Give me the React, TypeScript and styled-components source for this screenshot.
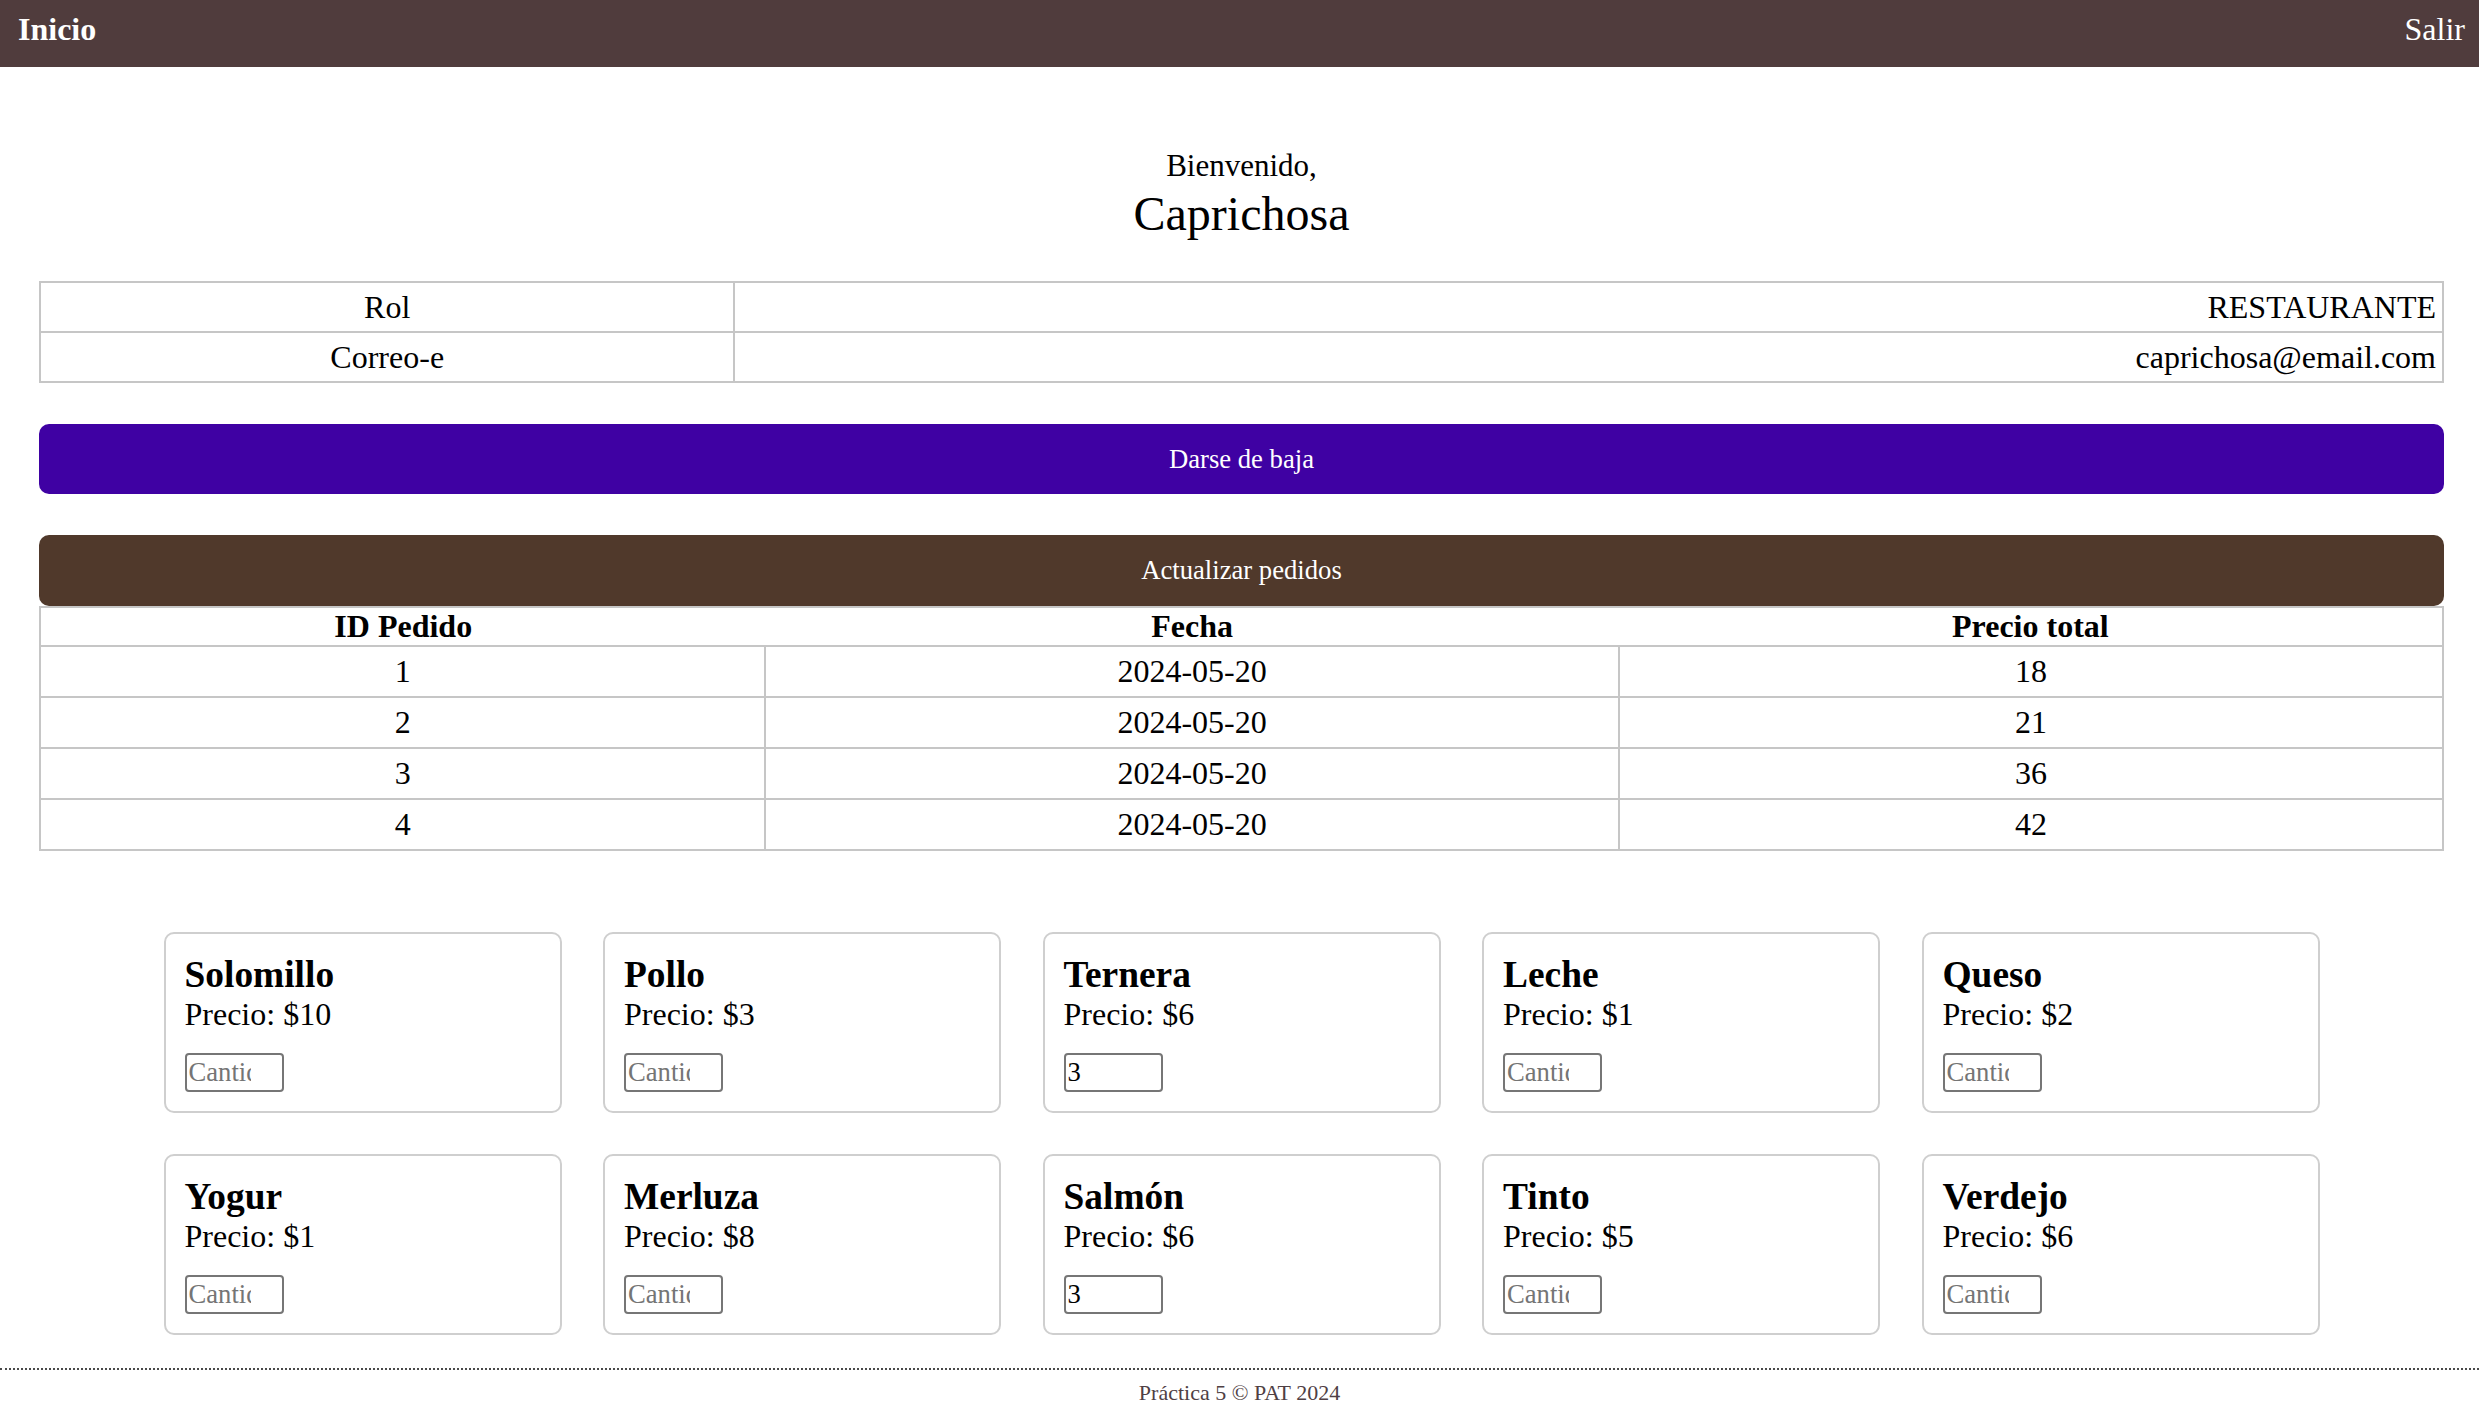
import React from "react";
import styled, { createGlobalStyle } from "styled-components";

const GlobalStyle = createGlobalStyle`
  html, body {
    margin: 0;
    padding: 0;
    background: #ffffff;
  }
  body {
    font-family: "Liberation Serif", "Times New Roman", serif;
    color: #000;
  }
  * { box-sizing: border-box; }
`;

const NavBar = styled.header`
  height: 67px;
  background: #503c3d;
  display: flex;
  justify-content: space-between;
  align-items: flex-start;
  padding: 11px 14px 0 18px;
`;

const NavLink = styled.a<{ $bold?: boolean }>`
  color: #ffffff;
  font-size: 32px;
  line-height: 37px;
  font-weight: ${(p) => (p.$bold ? 700 : 400)};
  text-decoration: none;
  cursor: pointer;
`;

const Main = styled.main`
  padding: 0 35px 0 39px;
`;

const Welcome = styled.section`
  margin-top: 81px;
  text-align: center;
`;

const Greeting = styled.p`
  margin: 0;
  font-size: 31px;
  line-height: 36px;
`;

const UserName = styled.h2`
  margin: 2px 0 0;
  font-size: 48px;
  line-height: 55px;
  font-weight: 400;
`;

const InfoTable = styled.table`
  width: 100%;
  margin-top: 40px;
  border-collapse: collapse;
  table-layout: fixed;
  font-size: 32px;
  line-height: 37px;
`;

const InfoCell = styled.td<{ $align: "center" | "right" }>`
  border: 2px solid #c6c6c6;
  padding: 6px 6px 5px;
  text-align: ${(p) => p.$align};
`;

const ActionButton = styled.button<{ $bg: string; $height: number }>`
  display: block;
  width: 100%;
  margin-top: 41px;
  height: ${(p) => p.$height}px;
  border: none;
  border-radius: 10px;
  background: ${(p) => p.$bg};
  color: #ffffff;
  font-family: "Liberation Serif", "Times New Roman", serif;
  font-size: 26.67px;
  cursor: pointer;
`;

const OrdersTable = styled.table`
  width: 100%;
  border-collapse: collapse;
  table-layout: fixed;
  border: 2px solid #c6c6c6;
  font-size: 32px;
  line-height: 37px;
`;

const HeadCell = styled.th`
  padding: 0;
  font-weight: 700;
  text-align: center;
  border-bottom: 2px solid #c6c6c6;
`;

const BodyCell = styled.td`
  padding: 6px 6px;
  text-align: center;
  border: 2px solid #c6c6c6;
`;

const ProductGrid = styled.section`
  margin-top: 81px;
  display: flex;
  flex-wrap: wrap;
  justify-content: center;
  gap: 41px 41.5px;
`;

const ProductCard = styled.article`
  width: 398px;
  border: 2px solid #cfcfcf;
  border-radius: 10px;
  padding: 19px;
`;

const ProductName = styled.h3`
  margin: 0;
  font-size: 37.4px;
  line-height: 43px;
  font-weight: 700;
`;

const ProductPrice = styled.p`
  margin: 0;
  font-size: 32px;
  line-height: 37px;
`;

const QtyInput = styled.input`
  display: block;
  margin-top: 20px;
  width: 99px;
  height: 39px;
  padding: 0 31px 0 2px;
  border: 2px solid #767676;
  border-radius: 4px;
  font-family: "Liberation Serif", "Times New Roman", serif;
  font-size: 26.67px;
  color: #000;
  background: #fff;
  &::placeholder {
    color: #757575;
  }
`;

const Footer = styled.footer`
  margin-top: 33px;
  border-top: 2px dotted #4a4a4a;
  padding-top: 10px;
  text-align: center;
  font-size: 22px;
  line-height: 25px;
  color: #4f4044;
`;

const orders = [
  { id: 1, fecha: "2024-05-20", total: 18 },
  { id: 2, fecha: "2024-05-20", total: 21 },
  { id: 3, fecha: "2024-05-20", total: 36 },
  { id: 4, fecha: "2024-05-20", total: 42 },
];

const products = [
  { name: "Solomillo", price: 10, qty: "" },
  { name: "Pollo", price: 3, qty: "" },
  { name: "Ternera", price: 6, qty: "3" },
  { name: "Leche", price: 1, qty: "" },
  { name: "Queso", price: 2, qty: "" },
  { name: "Yogur", price: 1, qty: "" },
  { name: "Merluza", price: 8, qty: "" },
  { name: "Salmón", price: 6, qty: "3" },
  { name: "Tinto", price: 5, qty: "" },
  { name: "Verdejo", price: 6, qty: "" },
];

export default function App() {
  return (
    <>
      <GlobalStyle />
      <NavBar>
        <NavLink $bold>Inicio</NavLink>
        <NavLink>Salir</NavLink>
      </NavBar>
      <Main>
        <Welcome>
          <Greeting>Bienvenido,</Greeting>
          <UserName>Caprichosa</UserName>
        </Welcome>
        <InfoTable>
          <colgroup>
            <col style={{ width: "28.9%" }} />
            <col />
          </colgroup>
          <tbody>
            <tr>
              <InfoCell $align="center">Rol</InfoCell>
              <InfoCell $align="right">RESTAURANTE</InfoCell>
            </tr>
            <tr>
              <InfoCell $align="center">Correo-e</InfoCell>
              <InfoCell $align="right">caprichosa@email.com</InfoCell>
            </tr>
          </tbody>
        </InfoTable>
        <ActionButton $bg="#3f01a3" $height={70}>
          Darse de baja
        </ActionButton>
        <ActionButton $bg="#50392b" $height={71}>
          Actualizar pedidos
        </ActionButton>
        <OrdersTable>
          <colgroup>
            <col style={{ width: "30.19%" }} />
            <col style={{ width: "35.51%" }} />
            <col />
          </colgroup>
          <thead>
            <tr>
              <HeadCell>ID Pedido</HeadCell>
              <HeadCell>Fecha</HeadCell>
              <HeadCell>Precio total</HeadCell>
            </tr>
          </thead>
          <tbody>
            {orders.map((o) => (
              <tr key={o.id}>
                <BodyCell>{o.id}</BodyCell>
                <BodyCell>{o.fecha}</BodyCell>
                <BodyCell>{o.total}</BodyCell>
              </tr>
            ))}
          </tbody>
        </OrdersTable>
        <ProductGrid>
          {products.map((p) => (
            <ProductCard key={p.name}>
              <ProductName>{p.name}</ProductName>
              <ProductPrice>Precio: ${p.price}</ProductPrice>
              <QtyInput
                type="text"
                inputMode="numeric"
                placeholder="Cantidad"
                defaultValue={p.qty}
              />
            </ProductCard>
          ))}
        </ProductGrid>
      </Main>
      <Footer>Práctica 5 © PAT 2024</Footer>
    </>
  );
}
